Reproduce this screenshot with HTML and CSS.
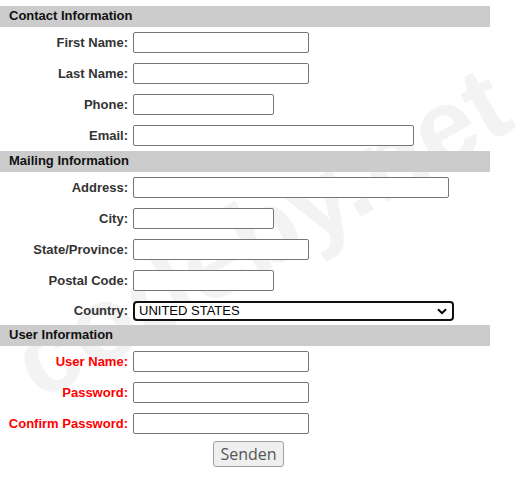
FILE: index.html
```html
<!DOCTYPE html>
<html>
<head>
<meta charset="utf-8">
<link rel="stylesheet" href="styles.css">
</head>
<body>
<div class="page">
  <div class="watermark">codeby.net</div>
  <form class="form">
    <div class="section">Contact Information</div>
    <div class="row"><label class="lbl">First Name:</label><input class="inp w176" type="text"></div>
    <div class="row"><label class="lbl">Last Name:</label><input class="inp w176" type="text"></div>
    <div class="row"><label class="lbl">Phone:</label><input class="inp w141" type="text"></div>
    <div class="row"><label class="lbl">Email:</label><input class="inp w281" type="text"></div>

    <div class="section">Mailing Information</div>
    <div class="row"><label class="lbl">Address:</label><input class="inp w316" type="text"></div>
    <div class="row"><label class="lbl">City:</label><input class="inp w141" type="text"></div>
    <div class="row"><label class="lbl">State/Province:</label><input class="inp w176" type="text"></div>
    <div class="row"><label class="lbl">Postal Code:</label><input class="inp w141" type="text"></div>
    <div class="row row-country"><label class="lbl">Country:</label>
      <div class="select-wrap">
        <select class="sel"><option>UNITED STATES</option></select>
        <svg class="chev" width="10" height="7" viewBox="0 0 10 7"><path d="M1 1.2 L5 5.2 L9 1.2" fill="none" stroke="#000" stroke-width="2"/></svg>
      </div>
    </div>

    <div class="section">User Information</div>
    <div class="row"><label class="lbl req">User Name:</label><input class="inp w176" type="text"></div>
    <div class="row"><label class="lbl req">Password:</label><input class="inp w176" type="password"></div>
    <div class="row"><label class="lbl req">Confirm Password:</label><input class="inp w176" type="password"></div>
    <div class="submit-row"><button class="btn" type="button">Senden</button></div>
  </form>
</div>
</body>
</html>
```
FILE: styles.css
```css
html, body {
  margin: 0;
  padding: 0;
  background: #ffffff;
}
.page {
  position: relative;
  width: 530px;
  height: 489px;
  overflow: hidden;
  font-family: "Liberation Sans", Arial, sans-serif;
}
.watermark {
  position: absolute;
  left: 40px;
  top: 312px;
  font-family: "Liberation Sans", Arial, sans-serif;
  font-weight: bold;
  font-size: 106px;
  line-height: 106px;
  height: 106px;
  color: #f3f3f3;
  white-space: nowrap;
  transform-origin: 0 90px;
  transform: rotate(-30deg);
  z-index: 0;
}
.form {
  position: relative;
  z-index: 1;
  width: 490px;
  padding-top: 6px;
}
.section {
  height: 21px;
  line-height: 20px;
  background: #cccccc;
  color: #111111;
  font-weight: bold;
  font-size: 13px;
  padding-left: 9px;
}
.row {
  display: grid;
  grid-template-columns: 128px 1fr;
  column-gap: 5px;
  align-items: center;
  height: 31px;
}
.row-country {
  height: 29px;
}
.lbl {
  text-align: right;
  font-weight: bold;
  font-size: 13px;
  color: #333333;
  white-space: nowrap;
}
.lbl.req {
  color: #ff0000;
}
.inp {
  box-sizing: border-box;
  height: 21px;
  margin: 0;
  border: 1px solid #767676;
  border-radius: 2px;
  background: #ffffff;
  padding: 1px 2px;
  font-size: 13px;
  font-family: "Liberation Sans", Arial, sans-serif;
}
.w141 { width: 141px; }
.w176 { width: 176px; }
.w281 { width: 281px; }
.w316 { width: 316px; }
.select-wrap {
  position: relative;
  width: 321px;
  height: 20px;
}
.sel {
  appearance: none;
  -webkit-appearance: none;
  box-sizing: border-box;
  width: 321px;
  height: 20px;
  margin: 0;
  border: 2px solid #101010;
  border-radius: 4px;
  background: #ffffff;
  padding: 0 0 0 4px;
  font-family: "Liberation Sans", Arial, sans-serif;
  font-size: 13px;
  color: #000000;
  outline: none;
}
.chev {
  position: absolute;
  right: 7px;
  top: 7px;
  pointer-events: none;
}
.submit-row {
  display: flex;
  padding-top: 2px;
  padding-left: 213px;
}
.btn {
  box-sizing: border-box;
  width: 71px;
  height: 26px;
  margin: 0;
  padding: 0;
  border: 1px solid #a0a0a0;
  border-radius: 3px;
  background: #efefef;
  color: #555555;
  font-family: "Open Sans", sans-serif;
  font-size: 16px;
  line-height: 22px;
}
```
